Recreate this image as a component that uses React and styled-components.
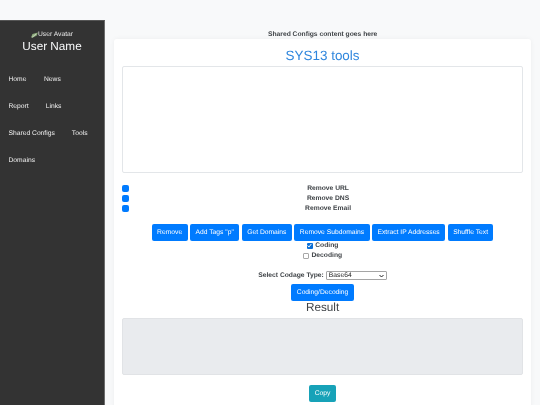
import React from 'react';
import styled, { createGlobalStyle } from 'styled-components';

const GlobalStyle = createGlobalStyle`
  html, body {
    margin: 0;
    height: 100%;
    overflow: hidden;
    background-color: #f8f9fa;
    font-family: "Liberation Sans", Arial, sans-serif;
    color: #3f4347;
    text-rendering: geometricPrecision;
  }
`;

const Page = styled.div`
  display: flex;
  align-items: flex-start;
  height: 405px;
  overflow: hidden;
  filter: blur(0.25px);
`;

const Sidebar = styled.aside`
  flex: 0 0 105px;
  box-sizing: border-box;
  height: 385px;
  margin-top: 20px;
  padding-top: 9px;
  background-color: #333333;
  border-right: 1px solid #6c6c6c;
  border-top: 1px solid #555;
  color: #f8f9fa;
`;

const Profile = styled.div`
  text-align: center;
  margin-bottom: 11px;
`;

const Avatar = styled.div`
  display: flex;
  justify-content: center;
  align-items: center;
  font-size: 6.72px;
  height: 9px;
  color: #e6e6e6;
`;

const UserName = styled.div`
  font-size: 11.76px;
  line-height: 16px;
`;

const NavRow = styled.div`
  display: flex;
  align-items: center;
  gap: ${(p) => p.$gap}px;
  height: 27px;
  padding-left: 8.5px;
`;

const NavLink = styled.a`
  font-size: 6.72px;
  color: #f0f0f0;
  white-space: nowrap;
`;

const Main = styled.main`
  flex: 1;
  min-width: 0;
  padding: 29px 8.7px 0 9px;
`;

const Note = styled.div`
  height: 10px;
  font-size: 6.72px;
  line-height: 11px;
  font-weight: 700;
  text-align: center;
`;

const Card = styled.section`
  box-sizing: border-box;
  height: 370px;
  padding: 0 8.6px 0 8.4px;
  background-color: #ffffff;
  border-radius: 3px;
  box-shadow: 0 0 5px rgba(0, 0, 0, 0.05);
  display: flex;
  flex-direction: column;
  align-items: center;
`;

const Title = styled.h1`
  margin: 7px 0 0;
  height: 20px;
  font-size: 13.44px;
  line-height: 19px;
  font-weight: 400;
  color: #2f86dd;
`;

const Input = styled.div`
  align-self: stretch;
  box-sizing: border-box;
  height: 107px;
  background-color: #ffffff;
  border: 1px solid #e3e6e9;
  border-radius: 2px;
`;

const Options = styled.div`
  align-self: stretch;
  margin-top: 10px;
`;

const OptionRow = styled.div`
  display: flex;
  align-items: center;
  height: 10px;
`;

const BlueDot = styled.span`
  flex: 0 0 7px;
  height: 7px;
  border-radius: 2px;
  background-color: #007bff;
`;

const OptionLabel = styled.label`
  flex: 1;
  padding-left: 4px;
  text-align: center;
  font-size: 6.72px;
  line-height: 11px;
  font-weight: 700;
`;

const Buttons = styled.div`
  display: flex;
  justify-content: center;
  gap: 2.5px;
  margin-top: 11px;
`;

const Button = styled.button`
  box-sizing: border-box;
  height: 16.5px;
  padding: 0 5.46px;
  border: none;
  border-radius: 2px;
  background-color: ${(p) => (p.$info ? '#17a2b8' : '#007bff')};
  color: #ffffff;
  font-family: inherit;
  font-size: 6.72px;
  text-rendering: geometricPrecision;
  white-space: nowrap;
`;

const CheckRow = styled.div`
  display: flex;
  align-items: center;
  justify-content: center;
  gap: 2.5px;
  height: 10px;
  font-size: 6.72px;
  font-weight: 700;
`;

const CheckBox = styled.span`
  box-sizing: border-box;
  display: flex;
  align-items: center;
  justify-content: center;
  width: 6px;
  height: 6px;
  border-radius: 1px;
  background-color: ${(p) => (p.$on ? '#0b6fd6' : '#ffffff')};
  border: ${(p) => (p.$on ? 'none' : '1px solid #a8a8a8')};
`;

const SelectRow = styled.div`
  display: flex;
  align-items: center;
  justify-content: center;
  gap: 2px;
  height: 9px;
  margin-top: 10.5px;
  font-size: 6.72px;
  font-weight: 700;
`;

const FakeSelect = styled.span`
  box-sizing: border-box;
  display: flex;
  align-items: center;
  justify-content: space-between;
  width: 61px;
  height: 9px;
  padding: 0 2px;
  border: 1px solid #a5a5a5;
  border-radius: 1px;
  background-color: #fff;
  font-size: 6.72px;
  font-weight: 400;
  color: #222;
`;

const ButtonWrap = styled.div`
  display: flex;
  margin-top: ${(p) => p.$top}px;
`;

const ResultTitle = styled.h2`
  margin: 0;
  height: 13.5px;
  font-size: 11.76px;
  line-height: 13.5px;
  font-weight: 400;
`;

const ResultBox = styled.div`
  align-self: stretch;
  box-sizing: border-box;
  height: 57px;
  margin-top: 4px;
  background-color: #e9ebee;
  border: 1px solid #e1e3e6;
  border-radius: 2px;
`;

const navRows = [
  { gap: 17.5, links: ['Home', 'News'] },
  { gap: 17, links: ['Report', 'Links'] },
  { gap: 17, links: ['Shared Configs', 'Tools'] },
  { gap: 0, links: ['Domains'] },
];

const options = ['Remove URL', 'Remove DNS', 'Remove Email'];

const tools = [
  'Remove',
  'Add Tags "p"',
  'Get Domains',
  'Remove Subdomains',
  'Extract IP Addresses',
  'Shuffle Text',
];

function BrokenImage() {
  return (
    <svg width="7" height="6" viewBox="0 0 7 6">
      <path d="M0 5.5 L1.5 2 L6.8 0.5 L5.8 3.5 L2 5.5 Z" fill="#8fae7d" />
      <path d="M1 5.5 L5 2" stroke="#e8e8e8" strokeWidth="0.6" />
    </svg>
  );
}

function App() {
  return (
    <Page>
      <GlobalStyle />
      <Sidebar>
        <Profile>
          <Avatar>
            <BrokenImage />
            User Avatar
          </Avatar>
          <UserName>User Name</UserName>
        </Profile>
        {navRows.map((row) => (
          <NavRow key={row.links[0]} $gap={row.gap}>
            {row.links.map((link) => (
              <NavLink key={link}>{link}</NavLink>
            ))}
          </NavRow>
        ))}
      </Sidebar>
      <Main>
        <Note>Shared Configs content goes here</Note>
        <Card>
          <Title>SYS13 tools</Title>
          <Input />
          <Options>
            {options.map((option) => (
              <OptionRow key={option}>
                <BlueDot />
                <OptionLabel>{option}</OptionLabel>
              </OptionRow>
            ))}
          </Options>
          <Buttons>
            {tools.map((tool) => (
              <Button key={tool}>{tool}</Button>
            ))}
          </Buttons>
          <CheckRow>
            <CheckBox $on>
              <svg width="5" height="5" viewBox="0 0 8 8">
                <path d="M1 4 L3 6.5 L7 1.5" stroke="#fff" strokeWidth="1.6" fill="none" />
              </svg>
            </CheckBox>
            Coding
          </CheckRow>
          <CheckRow>
            <CheckBox />
            Decoding
          </CheckRow>
          <SelectRow>
            Select Codage Type:
            <FakeSelect>
              Base64
              <svg width="5" height="4" viewBox="0 0 10 8">
                <path d="M1 2 L5 6 L9 2" stroke="#222" strokeWidth="2" fill="none" />
              </svg>
            </FakeSelect>
          </SelectRow>
          <ButtonWrap $top={4}>
            <Button>Coding/Decoding</Button>
          </ButtonWrap>
          <ResultTitle>Result</ResultTitle>
          <ResultBox />
          <ButtonWrap $top={10}>
            <Button $info>Copy</Button>
          </ButtonWrap>
        </Card>
      </Main>
    </Page>
  );
}

export default App;
